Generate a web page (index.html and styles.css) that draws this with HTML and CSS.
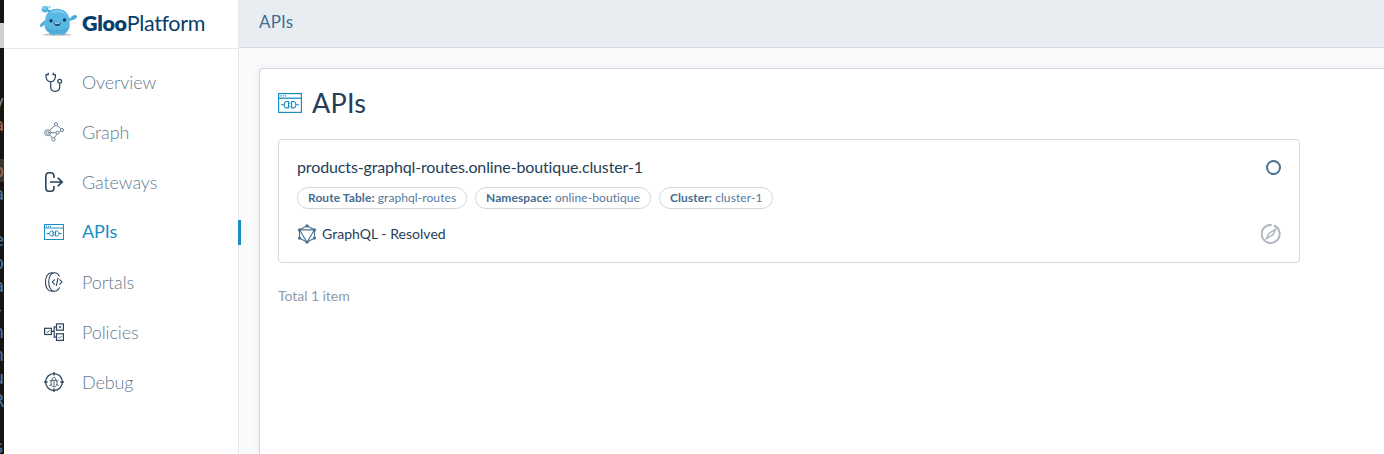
FILE: index.html
```html
<!DOCTYPE html>
<html lang="en">
<head>
<meta charset="utf-8">
<title>Gloo Platform - APIs</title>
<link rel="stylesheet" href="styles.css">
</head>
<body>
<svg width="0" height="0" class="defs">
  <symbol id="api" viewBox="0 0 24 20"><g fill="none" stroke="currentColor"><rect x=".6" y=".6" width="22.8" height="18.8" stroke-width="1.2"/><path d="M1 5.2h22" stroke-width="1.3"/><path d="M2.3 2.9h1.2m1.2 0h1.2m1.2 0h1.2" stroke-width="1.4"/><path d="M3 11.7h3.2M10.5 8.5v6.4H9c-3.7 0-3.7-6.4 0-6.4zM10.5 10.2h2m-2 3h2M13.6 8.5v6.4H15c3.7 0 3.7-6.4 0-6.4zM17.8 11.7H21" stroke-width="1.1"/></g></symbol>
</svg>
<div class="app">
  <div class="edge">
    <span class="blank"></span><span class="y">y</span><span class="orange">a</span><span class="red">:</span><span class="lit orange">p</span><span>a</span><span></span><span>e</span><span>p</span><span>a</span><span>-</span><span>n</span><span>n</span><span>u</span><span>R</span><span class="red">:</span><span>s</span>
  </div>
  <aside class="sidebar">
    <div class="brand">
      <svg class="mascot" width="40" height="37" viewBox="0 0 40 37">
        <ellipse cx="18" cy="34.7" rx="14.5" ry="1.2" fill="#ccc7c5"/>
        <path d="M7 9.500l6 3" stroke="#3e9fcf" stroke-width="2"/>
        <circle cx="6" cy="9.300" r="3.300" fill="#54b2df"/><circle cx="10.500" cy="7.200" r="1.200" fill="#8ed5ef"/><circle cx="5.300" cy="8.200" r="1.400" fill="#8ed5ef"/>
        <path d="M8 20c-3 0-4 2-6 3.500-2 2-1 5 1 3l5-3zM29 18c3 1 3-1.500 5-2.500 2-1.500 5 0 4 1.500-1 2-3 3-8 4z" fill="#4eacd9"/>
        <path d="M18 8.800c8 0 12 5 12.500 11.500 1 6-.5 10-3 12-1 3.500-5 3.500-7 2h-4c-2 1.500-6 1.500-7-2-3.500-2-4.500-6-3.500-12C7 13 10.500 8.800 18 8.800z" fill="#5ab7e2"/>
        <path d="M11 13.500c4-5.500 14-4.500 16 2-5-4-10-3-16-2z" fill="#7bcdec"/>
        <path d="M6 26c5 5.500 19 5.500 24 0-1 5-6 8.300-12 8.300S7 31 6 26z" fill="#3f9fcf" opacity=".5"/>
        <circle cx="12" cy="20.700" r="1.700" fill="#103d66"/><circle cx="25.500" cy="20" r="1.700" fill="#103d66"/>
        <path d="M14.500 22.500q4 1.500 7.500 0-1 3.500-3.500 3.500t-4-3.500z" fill="#173d62"/><path d="M16 23.400q2.500.7 4.800 0" stroke="#fff" stroke-width=".8" fill="none"/>
      </svg>
      <span class="wordmark"><b>Gloo</b>Platform</span>
    </div>
    <nav class="nav">
      <a class="item"><svg viewBox="0 0 20 20"><g fill="none" stroke="currentColor" stroke-width="1.250"><path d="M4.200.8v1.700H2.100C1.400 6 3 9.800 6.700 9.800S12 6 11.300 2.500H9.200V.8M6.700 9.800v5c0 6 9 6 9 0v-3.600"/><circle cx="15.700" cy="9.200" r="1.900"/></g></svg><span>Overview</span></a>
      <a class="item"><svg viewBox="0 0 20 20"><g fill="none" stroke="#60758a" stroke-width=".9"><circle cx="3.600" cy="10.700" r="3"/><circle cx="3.600" cy="10.700" r="1.300"/><circle cx="12" cy="2.200" r="1.600"/><circle cx="18" cy="8" r="1.500"/><circle cx="13.500" cy="10.700" r="1.500"/><circle cx="9.500" cy="17.400" r="1.700"/><path d="M5.500 8.400L11 3.400M13.200 3.400l3.800 3.600M5 10.700h7M5.500 12.800l3 3.200M12.900 12.100L10.200 16M16.700 8.800L15 10"/></g></svg><span>Graph</span></a>
      <a class="item"><svg viewBox="0 0 20 20"><path d="M10 6V4.500C10 2.300 8.800.8 7 .8H4.800C3 .8 1.800 2.300 1.800 4.500v11c0 2.200 1.200 3.700 3 3.700H7c1.800 0 3-1.500 3-3.700V14M6 10h12M13.800 5.800L18.200 10l-4.400 4.200" fill="none" stroke="currentColor" stroke-width="1.600"/></svg><span>Gateways</span></a>
      <a class="item active"><svg viewBox="0 0 20 16"><g fill="none" stroke="currentColor"><rect x=".5" y=".5" width="19" height="15"/><path d="M1 4h18"/><path d="M2 2.300h1m1 0h1m1 0h1" stroke-width="1.200"/><path d="M2.500 9.500h3M9 7v5H7.800c-3 0-3-5 0-5zM9 8.500h1.500m-1.500 2h1.500M11.500 7v5h1.200c3 0 3-5 0-5zM15 9.500h2.800"/></g></svg><span>APIs</span></a>
      <a class="item"><svg viewBox="0 0 20 20"><g fill="none" stroke="currentColor" stroke-width="1.100"><path d="M7.500.7C3.600.7 1.500 5 1.500 10s2.100 9.300 6 9.300M15.500 4.500C14.300 2 12.500.7 10.500.7c-3.700 0-5.800 4.300-5.800 9.300s2.100 9.300 5.800 9.300c2 0 3.800-1.300 5-3.800M7.500.7h3M7.500 19.300h3"/><path d="M10.800 7.300L8.300 10l2.500 2.700M15.500 7.300L18 10l-2.500 2.700M14 6l-1.700 8"/></g></svg><span>Portals</span></a>
      <a class="item"><svg viewBox="0 0 20 20"><g fill="none" stroke="currentColor" stroke-width="1.200"><rect x=".6" y="6.300" width="6.800" height="6.200"/><rect x="12.500" y="1.900" width="6.900" height="6.300"/><rect x="12.500" y="11.800" width="6.900" height="6.600"/><path d="M7.400 9.400h2.800M12.500 4.900h-2.300v10.200h2.300"/><path d="M2.300 9.300l1.200 1.200 2.300-2.400M14.700 3.900l2.500 2.300m0-2.300l-2.500 2.300M14.300 15.100l1.200 1.200 2.300-2.400" stroke-width=".8"/></g></svg><span>Policies</span></a>
      <a class="item"><svg viewBox="0 0 20 20"><g fill="none" stroke="currentColor" stroke-width="1.300"><circle cx="10" cy="10" r="8.400"/><path d="M10 0v3.500M10 16.500V20M0 10h3.500M16.500 10H20"/><path d="M7.300 8.400h5.400c1 5-1 6.500-2.700 6.500s-3.700-1.500-2.700-6.500zM8 8.200c0-3.500 4-3.500 4 0M10 8.500v6M5.500 8.200l1.800 1.300M14.500 8.200l-1.800 1.300M5.300 13.600l2-1.100M14.700 13.600l-2-1.100" stroke-width=".8"/></g></svg><span>Debug</span></a>
    </nav>
  </aside>
  <main class="main">
    <header class="crumb"><span>APIs</span></header>
    <section class="panel">
      <h1 class="title"><svg width="24" height="20"><use href="#api"/></svg><span>APIs</span></h1>
      <article class="card">
        <div class="row head"><span class="name">products-graphql-routes.online-boutique.cluster-1</span><i class="status"></i></div>
        <div class="tags">
          <span class="tag t1"><b>Route Table:</b> graphql-routes</span><span class="tag t2"><b>Namespace:</b> online-boutique</span><span class="tag t3"><b>Cluster:</b> cluster-1</span>
        </div>
        <div class="row foot">
          <span class="kind"><svg width="20" height="20" viewBox="0 0 20 20"><g fill="none" stroke="#49708f" stroke-width="1.100"><path d="M10 1.800l7.500 4.100v8.200L10 18.200l-7.500-4.100V5.900z"/><path d="M2.500 5.900h15L10 18.200z"/></g><g fill="#49708f"><circle cx="10" cy="1.900" r="1.700"/><circle cx="17.500" cy="5.900" r="1.600"/><circle cx="17.500" cy="14.100" r="1.600"/><circle cx="10" cy="18.100" r="1.700"/><circle cx="2.500" cy="14.100" r="1.600"/><circle cx="2.500" cy="5.900" r="1.600"/></g></svg><span>GraphQL - Resolved</span></span>
          <svg width="20" height="20" viewBox="0 0 20 20" fill="none" stroke="#b1b7c2"><path d="M12.800 1.500A9 9 0 1 1 10.800 1" stroke-width="2"/><path d="M14.600 5.400l-2.500 5.200-2.700 1.600-4 2.400 2.500-5.200 2.700-1.800z" stroke-width="1.500"/></svg>
        </div>
      </article>
      <p class="total">Total 1 item</p>
    </section>
  </main>
</div>
</body>
</html>
```
FILE: styles.css
```css
* { box-sizing: border-box; }
body { margin: 0; font-family: Lato, "Open Sans", sans-serif; font-variant-ligatures: none; color: #253e58; background: #f9fafc; overflow: hidden; }
.defs { position: absolute; }
.app { display: flex; height: 454px; }
.edge { width: 4px; flex: none; background: #171512; overflow: hidden; display: flex; flex-direction: column; align-items: flex-end; font: 18px/23px "DejaVu Sans Mono", monospace; color: #4679a8; }
.edge span { height: 23px; flex: none; min-width: 4px; }
.edge .blank { height: 90px; width: 4px; background: linear-gradient(#171512 23px, #cfcfcc 23px, #cfcfcc 48px, #171512 48px); }
.edge .y { color: #788693; }
.edge .orange { color: #a8694b; }
.edge .red { color: #6e3222; }
.edge .lit { background: #393632; }
.sidebar { width: 235px; flex: none; background: #fff; border-right: 1px solid #e1e8ee; }
.brand { height: 49px; padding-left: 35px; display: flex; align-items: flex-start; border-bottom: 1px solid #e3ebf0; }
.mascot { flex: none; }
.wordmark { font-size: 21.500px; line-height: 28px; padding: 9px 0 0 3px; color: #063e6b; letter-spacing: -.35px; white-space: nowrap; }
.wordmark b { font-weight: 800; }
.nav { padding-top: 8px; }
.item { height: 50px; padding-left: 40px; display: flex; align-items: center; gap: 18px; font-size: 18px; font-weight: 300; color: #637a92; letter-spacing: -.1px; margin-right: -3px; white-space: nowrap; }
.item span { padding-bottom: 1px; }
.item svg { width: 20px; height: 20px; color: #2b435d; flex: none; }
.item.active { height: 25px; margin-top: 13px; margin-bottom: 12px; border-right: 3px solid #188fc4; color: #188fc4; font-weight: 400; }
.item.active span { padding-bottom: 3px; }
.item.active svg { height: 16px; margin-bottom: 2px; color: #188fc4; }
.main { flex: 1; min-width: 0; display: flex; flex-direction: column; }
.crumb { height: 48px; flex: none; background: #e8edf1; border-bottom: 1px solid #d1d8df; padding: 11px 0 0 20px; font-size: 17px; line-height: 22px; letter-spacing: .2px; color: #456c92; }
.panel { flex: 1; margin: 20px 0 0 20px; background: #fff; border: 1px solid #d4d7de; border-width: 1px 0 0 1px; border-radius: 4px 0 0 0; box-shadow: 0 0 8px rgba(40, 60, 80, .08); padding: 16px 0 0 18px; }
.title { margin: 0; height: 36px; display: flex; align-items: center; gap: 10px; font-size: 27px; font-weight: 400; letter-spacing: .2px; }
.title svg { color: #188fc4; }
.title span { padding-bottom: 2px; }
.card { width: 1022px; height: 124px; margin-top: 18px; border: 1px solid #d4d7de; border-radius: 4px; padding: 16px 18px 0; }
.row { display: flex; justify-content: space-between; align-items: center; }
.head { height: 22px; }
.name { font-size: 16px; letter-spacing: -.13px; padding-bottom: 2px; }
.status { width: 15px; height: 15px; border: 2px solid #49708f; border-radius: 50%; }
.tags { display: flex; gap: 8px; margin-top: 9px; }
.tag { height: 22px; border: 1px solid #d4d7de; border-radius: 11px; padding: 0 10px; font-size: 12px; line-height: 20px; letter-spacing: .08px; color: #55789b; white-space: nowrap; }
.tag b { color: #456c92; }
.t1 { width: 170px; }
.t2 { width: 176px; }
.t3 { width: 114px; }
.foot { height: 24px; margin-top: 13px; }
.kind { display: flex; align-items: center; gap: 5px; font-size: 14px; letter-spacing: .03px; }
.kind span { padding-bottom: 1px; }
.total { margin: 23px 0 0; font-size: 14px; line-height: 20px; letter-spacing: -.05px; color: #8d9bab; }
```
